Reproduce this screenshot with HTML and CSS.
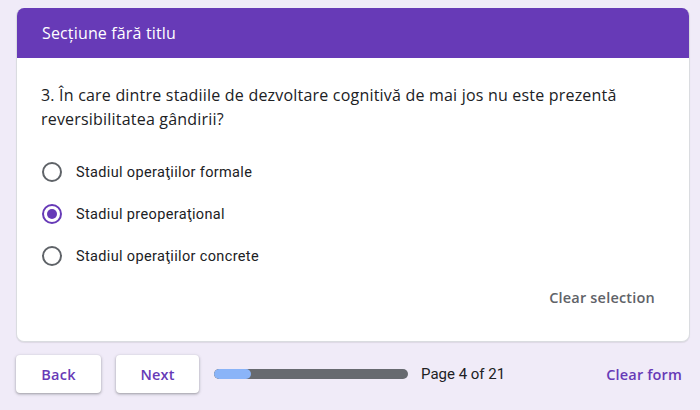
FILE: index.html
```html
<!DOCTYPE html>
<html lang="ro">
<head>
<meta charset="utf-8">
<link rel="stylesheet" href="styles.css">
</head>
<body>
<div class="page">
  <div class="card">
    <div class="card-header">Secțiune fără titlu</div>
    <div class="card-body">
      <div class="question">3. În care dintre stadiile de dezvoltare cognitivă de mai jos nu este prezentă reversibilitatea gândirii?</div>
      <div class="options">
        <div class="option">
          <span class="radio"></span>
          <span class="label">Stadiul operaţiilor formale</span>
        </div>
        <div class="option">
          <span class="radio checked"></span>
          <span class="label">Stadiul preoperaţional</span>
        </div>
        <div class="option">
          <span class="radio"></span>
          <span class="label">Stadiul operaţiilor concrete</span>
        </div>
      </div>
      <div class="clear-row"><span class="clear-sel">Clear selection</span></div>
    </div>
  </div>
  <div class="footer">
    <button class="btn">Back</button>
    <button class="btn">Next</button>
    <div class="progress"><div class="progress-fill" style="width: 19%"></div></div>
    <span class="page-count">Page 4 of 21</span>
    <span class="clear-form">Clear form</span>
  </div>
</div>
</body>
</html>
```
FILE: styles.css
```css
html, body {
  margin: 0;
  padding: 0;
  background: #f0ebf8;
  width: 700px;
  height: 410px;
  overflow: hidden;
}
.page {
  padding: 8px 10px 0 16px;
  font-family: "Open Sans", Roboto, sans-serif;
  color: #202124;
}
.card {
  background: #fff;
  border-radius: 8px;
  overflow: hidden;
  width: 674px;
  box-shadow: 0 1px 1px rgba(0,0,0,0.08);
  border: 1px solid #dadce0;
  border-top: none;
  box-sizing: border-box;
}
.card-header {
  background: #673ab7;
  color: #fff;
  height: 50px;
  box-sizing: border-box;
  padding: 0 25px;
  display: flex;
  align-items: center;
  font-size: 16px;
  font-weight: 500;
  letter-spacing: 0.15px;
}
.card-body {
  padding: 25px 34px 0 24px;
}
.question {
  font-size: 16px;
  line-height: 24px;
  letter-spacing: 0.2px;
  color: #202124;
}
.options {
  margin-top: 31px;
  display: flex;
  flex-direction: column;
  gap: 22px;
}
.option {
  display: flex;
  align-items: center;
  height: 20px;
  margin-left: 1px;
}
.radio {
  width: 20px;
  height: 20px;
  border: 2px solid #5f6368;
  border-radius: 50%;
  box-sizing: border-box;
  display: flex;
  align-items: center;
  justify-content: center;
}
.radio.checked {
  border-color: #673ab7;
}
.radio.checked::after {
  content: "";
  width: 10px;
  height: 10px;
  border-radius: 50%;
  background: #673ab7;
}
.label {
  margin-left: 14px;
  font-family: Roboto, sans-serif;
  font-size: 14.5px;
  letter-spacing: 0.35px;
  color: #202124;
}
.clear-row {
  display: flex;
  justify-content: flex-end;
  margin-top: 22px;
  height: 53px;
}
.clear-sel {
  font-size: 14.5px;
  font-weight: 600;
  color: #5f6368;
  line-height: 20px;
  letter-spacing: 0.2px;
}
.footer {
  display: flex;
  align-items: center;
  margin-top: 13px;
  width: 666px;
}
.btn {
  width: 85px;
  height: 38px;
  background: #fff;
  border: none;
  border-radius: 4px;
  box-shadow: 0 1px 2px rgba(60,64,67,0.3), 0 1px 3px 1px rgba(60,64,67,0.15);
  font-family: "Open Sans", Roboto, sans-serif;
  font-size: 14.5px;
  font-weight: 600;
  color: #673ab7;
  padding: 0;
  margin-right: 15px;
  letter-spacing: 0.2px;
}
.btn + .btn { width: 83px; }
.progress {
  width: 194px;
  height: 10px;
  border-radius: 5px;
  background: #676a70;
  overflow: hidden;
  margin-right: 13px;
}
.progress-fill {
  height: 100%;
  background: #8ab4f8;
  border-radius: 5px;
}
.page-count {
  font-family: Roboto, sans-serif;
  font-size: 15px;
  color: #202124;
}
.clear-form {
  margin-left: auto;
  font-size: 14.5px;
  font-weight: 600;
  color: #673ab7;
  letter-spacing: 0.15px;
}
```
